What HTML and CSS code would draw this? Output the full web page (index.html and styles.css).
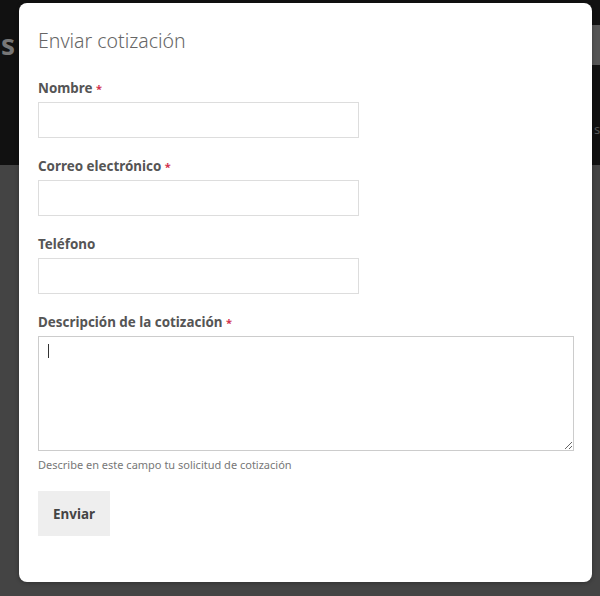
FILE: index.html
```html
<!DOCTYPE html>
<html lang="es">
<head>
    <meta charset="UTF-8">
    <meta name="viewport" content="width=device-width, initial-scale=1.0">
    <title>Enviar cotización</title>
    <link rel="stylesheet" href="styles.css">
</head>
<body>
    <div class="page-header">
        <span class="header-word">s</span>
        <div class="header-side">
            <div class="header-tab"></div>
            <span class="header-small">s</span>
        </div>
    </div>
    <div class="page-body"></div>

    <div class="modal">
        <h2 class="modal-title">Enviar cotización</h2>
        <form class="quote-form">
            <div class="field">
                <label for="nombre">Nombre <span class="req">*</span></label>
                <input type="text" id="nombre" class="short">
            </div>
            <div class="field">
                <label for="correo">Correo electrónico <span class="req">*</span></label>
                <input type="email" id="correo" class="short">
            </div>
            <div class="field">
                <label for="telefono">Teléfono</label>
                <input type="tel" id="telefono" class="short">
            </div>
            <div class="field">
                <label for="descripcion">Descripción de la cotización <span class="req">*</span></label>
                <div class="area-wrap">
                    <textarea id="descripcion"></textarea>
                    <span class="caret"></span>
                </div>
                <div class="help">Describe en este campo tu solicitud de cotización</div>
            </div>
            <button type="button" class="send-btn">Enviar</button>
        </form>
    </div>
</body>
</html>
```

FILE: styles.css
```css
body {
    margin: 0;
    background-color: #444;
    font-family: "Noto Sans", "Open Sans", sans-serif;
    height: 596px;
    overflow: hidden;
}
.page-header {
    height: 165px;
    background-color: #111;
    display: flex;
    justify-content: space-between;
}
.header-word {
    font-size: 28px;
    font-weight: 700;
    color: #777;
    line-height: 1;
    margin-top: 30px;
    margin-left: 1px;
}
.header-side {
    width: 8px;
    display: flex;
    flex-direction: column;
}
.header-tab {
    height: 40px;
    margin-top: 25px;
    background-color: #555;
}
.header-small {
    margin-top: 55px;
    font-size: 13px;
    color: #555;
    margin-left: 2px;
}
.modal {
    position: absolute;
    left: 19px;
    top: 3px;
    width: 535px;
    height: 554px;
    padding: 25px 19px 0 19px;
    background-color: #fff;
    border-radius: 8px;
    box-shadow: 0 1px 4px rgba(0,0,0,0.3);
}
.modal-title {
    margin: 0 0 25px 0;
    font-size: 19.5px;
    font-weight: 300;
    line-height: 26px;
    color: #666;
}
.field {
    margin-bottom: 19px;
}
label {
    display: block;
    height: 18px;
    font-size: 13.4px;
    font-weight: 700;
    line-height: 18px;
    color: #555;
    margin-bottom: 5px;
}
.req {
    color: #d2324e;
    font-size: 11px;
    line-height: 1;
}
input {
    display: block;
    box-sizing: border-box;
    height: 36px;
    border: 1px solid #ddd;
    padding: 6px 8px;
    outline: none;
}
.short {
    width: 321px;
}
.area-wrap {
    position: relative;
}
textarea {
    display: block;
    box-sizing: border-box;
    width: 536px;
    height: 115px;
    border: 1px solid #ccc;
    outline: none;
    margin: 0;
}
.caret {
    position: absolute;
    left: 10px;
    top: 8px;
    width: 1px;
    height: 14px;
    background-color: #333;
}
.help {
    font-size: 11px;
    line-height: 14px;
    color: #777;
    margin-top: 7px;
}
.send-btn {
    display: block;
    width: 72px;
    height: 45px;
    margin-top: 2px;
    border: none;
    background-color: #eee;
    color: #444;
    font-family: inherit;
    font-size: 13.4px;
    font-weight: 700;
    cursor: pointer;
}
.send-btn:hover {
    background-color: #e2e2e2;
}
```
